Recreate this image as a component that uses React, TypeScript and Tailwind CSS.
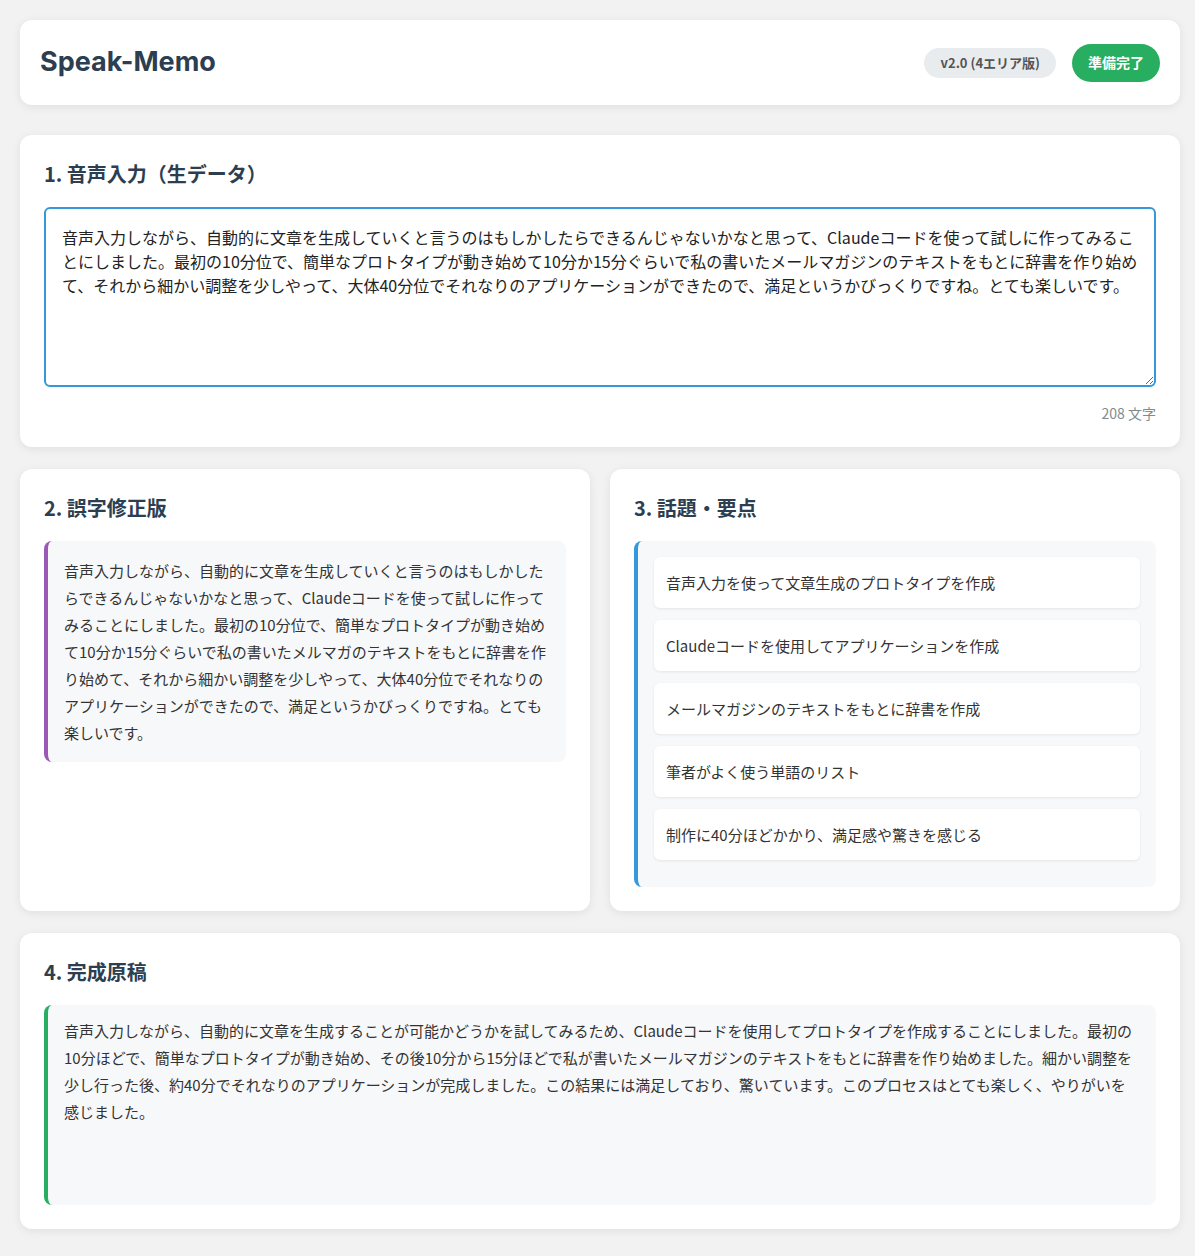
import React from "react";

const raw =
  "音声入力しながら、自動的に文章を生成していくと言うのはもしかしたらできるんじゃないかなと思って、Claudeコードを使って試しに作ってみることにしました。最初の10分位で、簡単なプロトタイプが動き始めて10分か15分ぐらいで私の書いたメールマガジンのテキストをもとに辞書を作り始めて、それから細かい調整を少しやって、大体40分位でそれなりのアプリケーションができたので、満足というかびっくりですね。とても楽しいです。";

const corrected =
  "音声入力しながら、自動的に文章を生成していくと言うのはもしかしたらできるんじゃないかなと思って、Claudeコードを使って試しに作ってみることにしました。最初の10分位で、簡単なプロトタイプが動き始めて10分か15分ぐらいで私の書いたメルマガのテキストをもとに辞書を作り始めて、それから細かい調整を少しやって、大体40分位でそれなりのアプリケーションができたので、満足というかびっくりですね。とても楽しいです。";

const topics = [
  "音声入力を使って文章生成のプロトタイプを作成",
  "Claudeコードを使用してアプリケーションを作成",
  "メールマガジンのテキストをもとに辞書を作成",
  "筆者がよく使う単語のリスト",
  "制作に40分ほどかかり、満足感や驚きを感じる",
];

const finalText =
  "音声入力しながら、自動的に文章を生成することが可能かどうかを試してみるため、Claudeコードを使用してプロトタイプを作成することにしました。最初の10分ほどで、簡単なプロトタイプが動き始め、その後10分から15分ほどで私が書いたメールマガジンのテキストをもとに辞書を作り始めました。細かい調整を少し行った後、約40分でそれなりのアプリケーションが完成しました。この結果には満足しており、驚いています。このプロセスはとても楽しく、やりがいを感じました。";

const font = {
  fontFamily: '"Noto Sans CJK JP", "Noto Sans", sans-serif',
};

function Card({ children, className = "" }: { children: React.ReactNode; className?: string }) {
  return (
    <div className={`bg-white rounded-xl shadow-[0_2px_10px_rgba(0,0,0,0.08)] p-6 ${className}`}>
      {children}
    </div>
  );
}

function Title({ children }: { children: React.ReactNode }) {
  return (
    <h2 className="text-[20px] leading-[30px] font-bold text-[#2c3e50] mb-[18px]">{children}</h2>
  );
}

export default function App() {
  return (
    <div className="min-h-screen bg-[#f2f2f2] pl-5 pr-[15px] pt-5 pb-5" style={font}>
      {/* Header */}
      <div className="bg-white rounded-xl shadow-[0_2px_10px_rgba(0,0,0,0.08)] h-[85px] px-5 flex items-center justify-between mb-[30px]">
        <h1
          className="text-[27px] font-bold text-[#2c3e50]"
          style={{ fontFamily: 'Inter, "Noto Sans CJK JP", sans-serif' }}
        >
          Speak-Memo
        </h1>
        <div className="flex items-center gap-4">
          <span className="bg-[#e9ecef] text-[#555] text-[13px] font-bold rounded-full h-[30px] px-4 flex items-center">
            v2.0 (4エリア版)
          </span>
          <span className="bg-[#27ae60] text-white text-[14px] font-bold rounded-full h-[38px] px-4 flex items-center">
            準備完了
          </span>
        </div>
      </div>

      {/* 1 */}
      <Card className="mb-[22px]">
        <Title>1. 音声入力（生データ）</Title>
        <textarea
          defaultValue={raw}
          className="block w-full h-[180px] border-2 border-[#3498db] rounded-md px-4 py-4 text-[16px] leading-6 text-[#222] outline-none resize-y"
          style={font}
        />
        <div className="text-right text-[14px] leading-5 text-[#7f8c8d] mt-4">208 文字</div>
      </Card>

      {/* 2 & 3 */}
      <div className="grid grid-cols-2 gap-5 mb-[22px]">
        <Card>
          <Title>2. 誤字修正版</Title>
          <div className="bg-[#f7f8fa] border-l-4 border-[#9b59b6] rounded-lg pl-4 pr-4 py-4 text-[15px] leading-[27px] text-[#333]">
            {corrected}
          </div>
        </Card>
        <Card>
          <Title>3. 話題・要点</Title>
          <div className="bg-[#f7f8fa] border-l-4 border-[#3498db] rounded-lg px-4 pt-4 pb-[15px]">
            {topics.map((t) => (
              <div
                key={t}
                className="bg-white rounded-md shadow-[0_1px_3px_rgba(0,0,0,0.08)] px-3 py-3 mb-3 text-[15px] leading-[27px] text-[#333]"
              >
                {t}
              </div>
            ))}
          </div>
        </Card>
      </div>

      {/* 4 */}
      <Card>
        <Title>4. 完成原稿</Title>
        <div className="bg-[#f7f8fa] border-l-4 border-[#27ae60] rounded-lg pl-4 pr-5 pt-3 pb-4 min-h-[200px] text-[15px] leading-[27px] text-[#333]">
          {finalText}
        </div>
      </Card>
    </div>
  );
}
